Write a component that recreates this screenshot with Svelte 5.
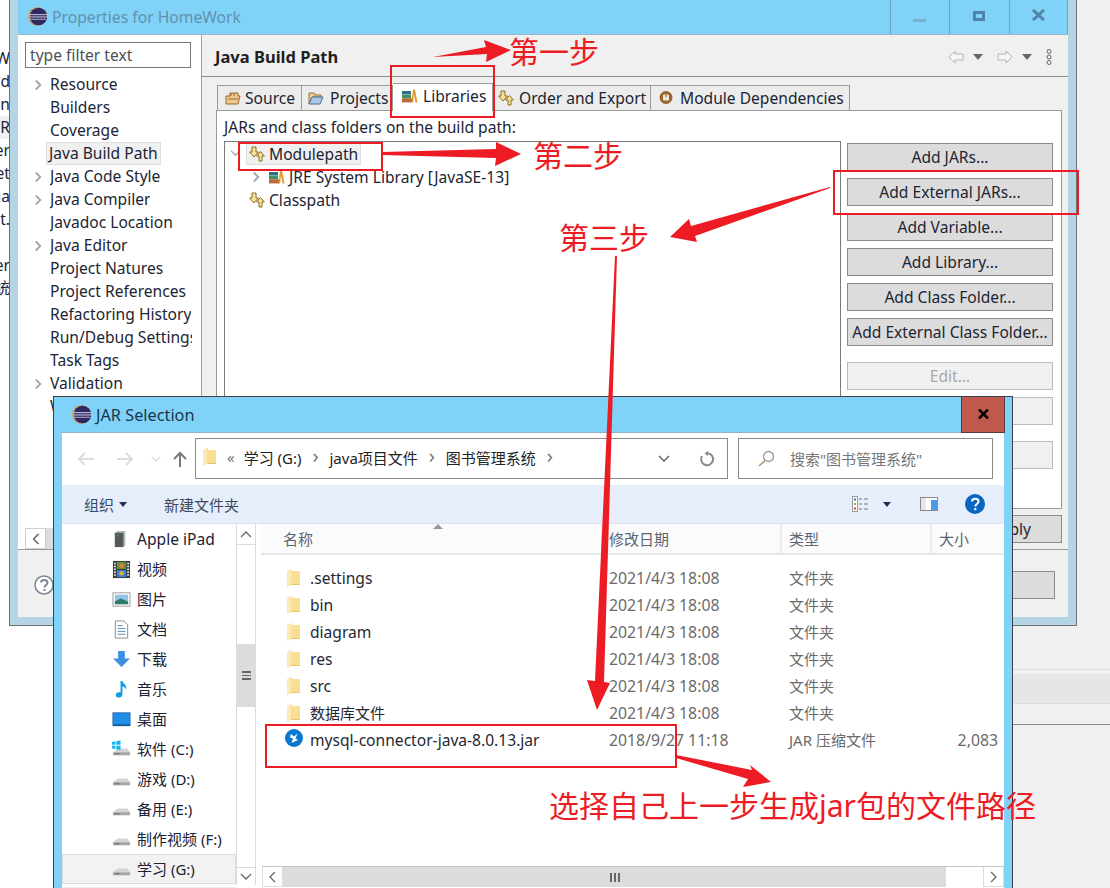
<script>
	const clipped = ['W', 'd', 'in', 'nR', 'er', 'et', 'ua', 't.', '', 'er', '统'];
	const navItems = [
		{ label: 'Resource', arrow: true },
		{ label: 'Builders' },
		{ label: 'Coverage' },
		{ label: 'Java Build Path', selected: true },
		{ label: 'Java Code Style', arrow: true },
		{ label: 'Java Compiler', arrow: true },
		{ label: 'Javadoc Location' },
		{ label: 'Java Editor', arrow: true },
		{ label: 'Project Natures' },
		{ label: 'Project References' },
		{ label: 'Refactoring History' },
		{ label: 'Run/Debug Settings' },
		{ label: 'Task Tags' },
		{ label: 'Validation', arrow: true },
		{ label: 'W' }
	];
	const tabs = [
		{ label: 'Source', icon: 'source', width: 85, pad: 7, gap: 4 },
		{ label: 'Projects', icon: 'projects', width: 91, pad: 6, gap: 6 },
		{ label: 'Libraries', icon: 'lib', width: 100, pad: 9, gap: 5, active: true },
		{ label: 'Order and Export', icon: 'cp', width: 158, pad: 5, gap: 5 },
		{ label: 'Module Dependencies', icon: 'module', width: 199, pad: 7, gap: 6 }
	];
	const buttons = [
		{ label: 'Add JARs...' },
		{ label: 'Add External JARs...' },
		{ label: 'Add Variable...' },
		{ label: 'Add Library...' },
		{ label: 'Add Class Folder...' },
		{ label: 'Add External Class Folder...' }
	];
	const places = [
		{ label: 'Apple iPad', icon: 'ipad', latin: true },
		{ label: '视频', icon: 'video' },
		{ label: '图片', icon: 'picture' },
		{ label: '文档', icon: 'doc' },
		{ label: '下载', icon: 'download' },
		{ label: '音乐', icon: 'music' },
		{ label: '桌面', icon: 'desktop' },
		{ label: '软件 (C:)', icon: 'sysdrive' },
		{ label: '游戏 (D:)', icon: 'drive' },
		{ label: '备用 (E:)', icon: 'drive' },
		{ label: '制作视频 (F:)', icon: 'drive' },
		{ label: '学习 (G:)', icon: 'drive', selected: true }
	];
	const files = [
		{ name: '.settings', date: '2021/4/3 18:08', type: '文件夹' },
		{ name: 'bin', date: '2021/4/3 18:08', type: '文件夹' },
		{ name: 'diagram', date: '2021/4/3 18:08', type: '文件夹' },
		{ name: 'res', date: '2021/4/3 18:08', type: '文件夹' },
		{ name: 'src', date: '2021/4/3 18:08', type: '文件夹' },
		{ name: '数据库文件', date: '2021/4/3 18:08', type: '文件夹', cjk: true },
		{ name: 'mysql-connector-java-8.0.13.jar', date: '2018/9/27 11:18', type: 'JAR 压缩文件', size: '2,083', jar: true }
	];
</script>

{#snippet eclipse()}
	<svg class="logo" viewBox="0 0 20 20">
		<circle cx="10" cy="10" r="10" fill="#c9a163" />
		<circle cx="11" cy="10" r="9.2" fill="#2e2960" />
		<rect x="1" y="7.6" width="19" height="1" fill="#d8d8e8" />
		<rect x="1" y="10" width="19" height="1" fill="#d8d8e8" />
		<rect x="1" y="12.4" width="18" height="1" fill="#b8b8d0" />
	</svg>
{/snippet}

{#snippet chevron()}
	<svg class="chev" viewBox="0 0 10 12"><path d="M2 1l5 5-5 5" fill="none" stroke="#a4a4a4" stroke-width="2" /></svg>
{/snippet}

{#snippet small(kind)}
	<svg class="small" viewBox="0 0 16 16">
		{#if kind === 'lib'}
			<rect x="0" y="3" width="9" height="3.4" fill="#2f6f86" />
			<rect x="0" y="6.6" width="9" height="3.4" fill="#3f9160" />
			<rect x="0" y="10.2" width="10" height="4.2" fill="#b9683a" />
			<path d="M9.5 14.4L11 1.6h2l2.5 12.8h-2l-1.6-8-.8 8z" fill="#e49b2e" />
		{:else if kind === 'cp'}
			<path d="M3 1h4v5h2.4L5 11 .6 6H3z" fill="#f7e29c" stroke="#8c6d20" />
			<path d="M10 15h3v-5h2.4L11.5 5.5 7.6 10H10z" fill="#f7e29c" stroke="#8c6d20" />
		{:else if kind === 'source'}
			<path d="M1 6h4V3h8v3h2l-2 8H1z" fill="#efc98a" stroke="#8f6a34" />
			<path d="M6 3v3M9 3v3M3 9h10" stroke="#8f6a34" fill="none" />
		{:else if kind === 'projects'}
			<path d="M1 3h5l1 2h6v2H4l-3 7z" fill="#e9d38f" stroke="#8a7338" />
			<path d="M4 7h11l-3 7H1z" fill="#a8c6ea" stroke="#4f6f9c" />
		{:else if kind === 'module'}
			<circle cx="8" cy="7.5" r="6.5" fill="#96662f" />
			<rect x="5" y="4.5" width="6" height="6" rx="1" fill="#f2ead8" />
			<rect x="7.4" y="4.5" width="1.2" height="2.6" fill="#96662f" />
		{/if}
	</svg>
{/snippet}

{#snippet folder()}
	<svg class="folder" viewBox="0 0 13 18">
		<path d="M0 2L5 0v2h8v14H4l-4 2z" fill="#f8df93" />
		<path d="M0 2L4 .4V16l-4 2z" fill="#fbeab6" />
		<path d="M4 16h9v-1H4z" fill="#e8c468" />
	</svg>
{/snippet}

{#snippet place(kind)}
	<svg class="place" viewBox="0 0 20 20">
		{#if kind === 'ipad'}
			<path d="M3 3l3-2h8v15l-2 2H3z" fill="#b4b4b4" />
			<rect x="3" y="3" width="9" height="15" fill="#55595c" />
			<rect x="5" y="5" width="2" height="2" fill="#3fa14a" />
		{:else if kind === 'video'}
			<rect x="1" y="1" width="18" height="18" fill="#3a3a3a" />
			<rect x="5" y="2" width="10" height="7.5" fill="#6d8f3a" />
			<rect x="5" y="10.5" width="10" height="7.5" fill="#3f7fcf" />
			<circle cx="10" cy="6" r="2.4" fill="#d8843a" />
			<circle cx="10" cy="14" r="2.4" fill="#d8b04a" />
			{#each [3, 6, 9, 12, 15] as y}
				<rect x="2" {y} width="2" height="1.6" fill="#eee" />
				<rect x="16" {y} width="2" height="1.6" fill="#eee" />
			{/each}
		{:else if kind === 'picture'}
			<rect x="1" y="3" width="18" height="14" fill="#fff" stroke="#9a9a9a" />
			<rect x="3" y="5" width="14" height="10" fill="#8fc3e8" />
			<path d="M3 12l6-3 8 3v3H3z" fill="#2f7a6b" />
		{:else if kind === 'doc'}
			<path d="M3.5 1h9l4 4v14h-13z" fill="#fff" stroke="#8a8a8a" />
			<path d="M6 6h5M6 9h8M6 12h8M6 15h8" stroke="#4a8ac0" />
		{:else if kind === 'download'}
			<path d="M6.5 1h7v8H19l-9 9-9-9h5.5z" fill="#3f8fe0" />
		{:else if kind === 'music'}
			<path d="M9 1h2c.5 3 5 4 4 9-1-2-2.500-3-4-3.200V15c0 2.500-2 3.500-4 3.500S4 17.500 4 15.500 6 12.500 9 13z" fill="#0f9fe8" />
		{:else if kind === 'desktop'}
			<rect x="1" y="3" width="18" height="13" fill="#1f8fe8" stroke="#2a6aa8" />
			<rect x="1" y="15" width="18" height="2" fill="#1a5f9c" />
		{:else}
			<path d="M1 13l5-4h10l3 4v3H1z" fill="#d4d4d4" />
			<path d="M1 13h18v3H1z" fill="#a6a6a6" />
			<rect x="3" y="14" width="5" height="1" fill="#666" />
			{#if kind === 'sysdrive'}
				<path d="M0 2l3.500-.6V5H0zM4.500 1.300L9 .6V5H4.500zM0 6h3.500v3.600L0 9zM4.500 6H9v4.500l-4.500-.7z" fill="#12b4ee" />
			{/if}
		{/if}
	</svg>
{/snippet}

<div class="desktop">
	<div class="backdrop">
		<div class="band"></div>
		<div class="rule"></div>
	</div>

	<div class="behind">
		{#each clipped as t}
			<div class="behind-row" class:hl={t === 'nR'}><span>{t}</span></div>
		{/each}
	</div>

	<section class="props">
		<header class="props-title">
			<span class="title-logo">{@render eclipse()}</span>
			<span class="props-title-text">Properties for HomeWork</span>
			<div class="win-ctrls">
				<div class="win-ctrl"><i class="ctl-min"></i></div>
				<div class="win-ctrl"><i class="ctl-max"></i></div>
				<div class="win-ctrl">
					<svg width="13" height="12" viewBox="0 0 13 12"><path d="M1 1l11 10M12 1L1 11" stroke="#4f86a8" stroke-width="3" /></svg>
				</div>
			</div>
		</header>

		<div class="props-body">
			<nav class="side">
				<div class="filter">type filter text</div>
				<ul class="side-list">
					{#each navItems as item}
						<li class="side-row">
							<span class="side-arrow">{#if item.arrow}{@render chevron()}{/if}</span>
							<span class="side-label" class:picked={item.selected}>{item.label}</span>
						</li>
					{/each}
				</ul>
				<div class="side-scroll">
					<div class="scroll-btn">
						<svg width="8" height="12" viewBox="0 0 8 12"><path d="M6.500 1l-5 5 5 5" fill="none" stroke="#555" stroke-width="1.300" /></svg>
					</div>
					<div class="scroll-thumb"></div>
				</div>
			</nav>

			<main class="main">
				<div class="main-head">
					<h1>Java Build Path</h1>
					<div class="history">
						<svg width="16" height="14" viewBox="0 0 16 14"><path d="M1 7l6-6v3h8v6H7v3z" fill="#f6f6f6" stroke="#b4b4b4" /></svg>
						<i class="drop"></i>
						<svg width="16" height="14" viewBox="0 0 16 14"><path d="M15 7L9 1v3H1v6h8v3z" fill="#f6f6f6" stroke="#b4b4b4" /></svg>
						<i class="drop"></i>
						<svg width="6" height="16" viewBox="0 0 6 16">
							<circle cx="3" cy="2.500" r="2" fill="none" stroke="#666" />
							<circle cx="3" cy="8" r="2" fill="none" stroke="#666" />
							<circle cx="3" cy="13.500" r="2" fill="none" stroke="#666" />
						</svg>
					</div>
				</div>

				<div class="tabs">
					{#each tabs as tab}
						<div
							class="tab"
							class:active={tab.active}
							style="width:{tab.width}px;padding-left:{tab.pad}px;gap:{tab.gap}px"
						>
							{@render small(tab.icon)}<span>{tab.label}</span>
						</div>
					{/each}
				</div>

				<div class="panel">
					<p class="panel-label">JARs and class folders on the build path:</p>
					<div class="panel-grid">
						<div class="tree">
							<div class="tree-row lvl0">
								<svg class="chev-down" viewBox="0 0 12 8"><path d="M1 1l5 5 5-5" fill="none" stroke="#a4a4a4" stroke-width="1.500" /></svg>
								<span class="tree-picked">{@render small('cp')}<span>Modulepath</span></span>
							</div>
							<div class="tree-row lvl1">
								<span class="tree-chev">{@render chevron()}</span>
								{@render small('lib')}<span>JRE System Library [JavaSE-13]</span>
							</div>
							<div class="tree-row lvl2">
								{@render small('cp')}<span>Classpath</span>
							</div>
						</div>
						<div class="btns">
							{#each buttons as b}
								<div class="btn">{b.label}</div>
							{/each}
							<div class="btn off first-off">Edit...</div>
							<div class="btn off"></div>
							<div class="btn off far-off"></div>
						</div>
					</div>
				</div>

				<div class="apply-row"><div class="btn apply">Apply</div></div>
			</main>
		</div>

		<footer class="props-foot">
			<svg class="help" width="20" height="20" viewBox="0 0 20 20">
				<circle cx="10" cy="10" r="9" fill="#fff" stroke="#7c8494" stroke-width="1.500" />
				<path d="M7 7.500C7 4 13.500 4 13.500 7.500c0 2.500-3 2.500-3 5" fill="none" stroke="#7c8494" stroke-width="2" />
				<rect x="9.500" y="14" width="2" height="2" fill="#7c8494" />
			</svg>
			<div class="btn foot-btn">Cancel</div>
		</footer>
	</section>

	<section class="dialog">
		<header class="dlg-title">
			<span class="dlg-logo">{@render eclipse()}</span>
			<span class="dlg-title-text">JAR Selection</span>
			<div class="dlg-close">
				<svg width="11" height="10" viewBox="0 0 11 10"><path d="M1 .5l9 9M10 .5l-9 9" stroke="#000" stroke-width="2.500" /></svg>
			</div>
		</header>

		<div class="dlg-inner">
			<div class="addr-bar">
				<div class="addr-nav">
					<svg width="18" height="14" viewBox="0 0 18 14"><path d="M17 7H2M8 1L2 7l6 6" fill="none" stroke="#dcdcdc" stroke-width="2" /></svg>
					<svg width="18" height="14" viewBox="0 0 18 14"><path d="M1 7h15M10 1l6 6-6 6" fill="none" stroke="#dcdcdc" stroke-width="2" /></svg>
					<svg width="10" height="6" viewBox="0 0 10 6"><path d="M1 1l4 4 4-4" fill="none" stroke="#dcdcdc" stroke-width="1.500" /></svg>
					<svg width="14" height="16" viewBox="0 0 14 16"><path d="M7 16V2M1 8l6-6 6 6" fill="none" stroke="#7a7a7a" stroke-width="2" /></svg>
				</div>
				<div class="addr">
					{@render folder()}
					<span class="crumb-mark">«</span>
					<span class="crumb">学习 (G:)</span>
					<span class="crumb-sep">›</span>
					<span class="crumb">java项目文件</span>
					<span class="crumb-sep">›</span>
					<span class="crumb">图书管理系统</span>
					<span class="crumb-sep">›</span>
					<div class="addr-end">
						<svg width="12" height="7" viewBox="0 0 12 7"><path d="M1 1l5 5 5-5" fill="none" stroke="#666" stroke-width="1.500" /></svg>
						<svg width="16" height="16" viewBox="0 0 16 16"><path d="M8.500 2.200A6 6 0 1 1 3 5" fill="none" stroke="#888" stroke-width="2" /><path d="M9 0v5L5.500 2.500z" fill="#888" /></svg>
					</div>
				</div>
				<div class="search">
					<svg width="17" height="17" viewBox="0 0 17 17"><circle cx="10.500" cy="6.500" r="5" fill="none" stroke="#9a9a9a" stroke-width="1.300" /><path d="M7 10.500L1 16" stroke="#b08a6a" stroke-width="1.300" /></svg>
					<span>搜索"图书管理系统"</span>
				</div>
			</div>

			<div class="toolbar">
				<span class="tool">组织</span>
				<i class="drop navy"></i>
				<span class="tool new-folder">新建文件夹</span>
				<div class="tool-right">
					<svg width="18" height="16" viewBox="0 0 18 16">
						<rect x=".5" y=".5" width="5" height="15" fill="#fff" stroke="#9a9a9a" />
						<rect x="2" y="2.500" width="2" height="2" fill="#3a6ab0" />
						<rect x="2" y="7" width="2" height="2" fill="#c09a40" />
						<rect x="2" y="11.500" width="2" height="2" fill="#d04040" />
						<path d="M7 3h3M12 3h4M7 8h3M12 8h4M7 13h3M12 13h4" stroke="#777" />
					</svg>
					<i class="drop navy view-drop"></i>
					<svg class="pane" width="18" height="14" viewBox="0 0 18 14">
						<rect x=".5" y=".5" width="17" height="13" fill="#fff" stroke="#8a8a8a" />
						<rect x="11" y="3" width="6" height="10" fill="#4a9ae8" />
						<rect x="1" y="1" width="5" height="12" fill="#e8e8e8" />
					</svg>
					<svg class="qm" width="20" height="20" viewBox="0 0 20 20">
						<circle cx="10" cy="10" r="10" fill="#0b66c2" />
						<path d="M7 7.500C7 3.800 13.500 3.800 13.500 7.500c0 2.700-3.200 2.300-3.200 5" fill="none" stroke="#fff" stroke-width="2" />
						<rect x="9.300" y="14" width="2" height="2.200" fill="#fff" />
					</svg>
				</div>
			</div>

			<div class="browser">
				<ul class="places">
					{#each places as p}
						<li class="place-row" class:picked={p.selected} class:latin={p.latin}>
							{@render place(p.icon)}<span>{p.label}</span>
						</li>
					{/each}
				</ul>
				<div class="vscroll">
					<div class="vs-btn"><svg width="12" height="7" viewBox="0 0 12 7"><path d="M1 6l5-5 5 5" fill="none" stroke="#666" stroke-width="1.300" /></svg></div>
					<div class="vs-track">
						<div class="vs-thumb"><i></i><i></i><i></i></div>
					</div>
					<div class="vs-btn"><svg width="12" height="7" viewBox="0 0 12 7"><path d="M1 1l5 5 5-5" fill="none" stroke="#666" stroke-width="1.300" /></svg></div>
				</div>

				<div class="listing">
					<div class="list-head">
						<span class="col c-name">名称</span>
						<span class="col c-date">修改日期</span>
						<span class="col c-type">类型</span>
						<span class="col c-size">大小</span>
						<svg class="sort" width="10" height="5" viewBox="0 0 10 5"><path d="M5 0l5 5H0z" fill="#999" /></svg>
					</div>
					<div class="rows">
						{#each files as f}
							<div class="file">
								<span class="file-name" class:cjk={f.cjk}>
									{#if f.jar}
										<svg class="jar" viewBox="0 0 18 18">
											<circle cx="9" cy="9" r="9" fill="#0a78d0" />
											<path d="M6 5l3 2.500 3.500-3-2 5 2.500 1.500-6.500 3 1.500-4.500-3-1z" fill="#fff" />
										</svg>
									{:else}
										{@render folder()}
									{/if}
									<span>{f.name}</span>
								</span>
								<span class="meta">{f.date}</span>
								<span class="meta cjk">{f.type}</span>
								<span class="meta size">{f.size ?? ''}</span>
							</div>
						{/each}
					</div>
					<div class="hscroll">
						<div class="hs-btn"><svg width="7" height="12" viewBox="0 0 7 12"><path d="M6 1L1 6l5 5" fill="none" stroke="#666" stroke-width="1.300" /></svg></div>
						<div class="hs-thumb"><i></i><i></i><i></i></div>
						<div class="hs-track"></div>
						<div class="hs-btn"><svg width="7" height="12" viewBox="0 0 7 12"><path d="M1 1l5 5-5 5" fill="none" stroke="#666" stroke-width="1.300" /></svg></div>
					</div>
				</div>
			</div>
		</div>
	</section>

	<!-- red markup drawn on top of the screenshot -->
	<div class="mark box-lib"></div>
	<div class="mark box-module"></div>
	<div class="mark box-ext"></div>
	<div class="mark box-jar"></div>

	<svg class="arrows" viewBox="0 0 1110 888">
		<polygon points="433,57 486,47 484,40 511,50 486,62 487,54" />
		<polygon points="382,152 496,149 496,142 521,154 495,166 496,158 382,155" />
		<polygon points="830,187 691,226 689,219 670,237 697,242 695,236 830,188" />
		<polygon points="615,256 617,256 604,682 610,683 597,710 587,680 595,681" />
		<polygon points="676,755 752,770 750,765 771,782 743,787 748,779 676,758" />
	</svg>

	<div class="note n1">第一步</div>
	<div class="note n2">第二步</div>
	<div class="note n3">第三步</div>
	<div class="note n4">选择自己上一步生成jar包的文件路径</div>
</div>

<style>
	:global(body) {
		margin: 0;
		background: #fff;
	}

	* {
		box-sizing: border-box;
	}

	ul {
		list-style: none;
		margin: 0;
		padding: 0;
	}

	.desktop {
		position: relative;
		width: 1110px;
		height: 888px;
		overflow: hidden;
		font-family: 'Noto Sans', 'Noto Sans CJK SC', sans-serif;
		font-size: 15.6px;
		color: #1c2433;
	}

	.backdrop {
		position: absolute;
		left: 700px;
		top: 0;
		width: 410px;
		height: 888px;
		background: #f0f0f0;
		padding-top: 669px;
	}

	.band {
		height: 35px;
		margin-top: 0;
		border-top: 1px solid #dcdcdc;
		border-bottom: 1px solid #dcdcdc;
		background: linear-gradient(#f0f0f0 0 4px, #e6e6e6 4px);
	}

	.rule {
		height: 1px;
		margin-top: 20px;
		background: #888;
	}

	.behind {
		position: absolute;
		left: 0;
		top: 47px;
		width: 10px;
		overflow: hidden;
	}

	.behind-row {
		display: flex;
		justify-content: flex-end;
		height: 23px;
		line-height: 23px;
		white-space: nowrap;
	}

	.behind-row.hl {
		background: #f0f0f0;
	}

	/* Properties window */
	.props {
		position: absolute;
		left: 9px;
		top: 0;
		width: 1068px;
		height: 626px;
		display: flex;
		flex-direction: column;
		padding: 0 8px 8px;
		background: #b5d5e4;
		border: 1px solid #6a7078;
		border-top: 0;
	}

	.props-title {
		display: flex;
		align-items: center;
		height: 35px;
		flex: none;
		margin: 0;
		background: #81d2f9;
		border-bottom: 1px solid #9db8c6;
	}

	.title-logo {
		display: flex;
		margin: -1px 5px 0 10px;
	}

	.logo {
		width: 19px;
		height: 19px;
	}

	.props-title-text {
		font-size: 15.700px;
		color: #5f93ad;
	}

	.win-ctrls {
		display: flex;
		margin-left: auto;
		height: 100%;
	}

	.win-ctrl {
		width: 59.500px;
		display: flex;
		align-items: center;
		justify-content: center;
		border-left: 1px solid #6fa3bd;
		padding-bottom: 5px;
	}

	.win-ctrl:last-child {
		border-right: 1px solid #6fa3bd;
	}

	.ctl-min {
		display: block;
		width: 13px;
		height: 3px;
		margin-top: 12px;
		background: #79afcc;
	}

	.ctl-max {
		display: block;
		width: 12px;
		height: 10px;
		border: 3px solid #4f86a8;
		margin-top: 2px;
	}

	.props-body {
		display: flex;
		height: 514px;
		flex: none;
	}

	.side {
		width: 184px;
		flex: none;
		display: flex;
		flex-direction: column;
		background: #fff;
		border-right: 1px solid #a0a0a0;
		padding-top: 7px;
		position: relative;
	}

	.filter {
		margin-left: 7px;
		width: 166px;
		height: 26px;
		border: 1px solid #7a7a7a;
		padding-left: 4px;
		line-height: 24px;
		color: #4b4f55;
	}

	.side-list {
		margin-top: 5px;
		height: 415px;
		overflow: hidden;
	}

	.side-row {
		display: flex;
		align-items: center;
		height: 23px;
	}

	.side-arrow {
		display: flex;
		justify-content: center;
		width: 32px;
		padding-left: 8px;
		flex: none;
	}

	.chev {
		display: block;
		width: 9px;
		height: 12px;
	}

	.side-label {
		white-space: nowrap;
		line-height: 23px;
		max-width: 142px;
		overflow: hidden;
	}

	.side-label.picked {
		margin-left: -4px;
		padding: 0 3px;
		background: #f0f0f0;
		box-shadow: inset 0 0 0 1px #dedede;
	}

	.side-scroll {
		display: flex;
		height: 21px;
		margin-top: auto;
		margin-left: 7px;
	}

	.scroll-btn {
		width: 21px;
		display: flex;
		align-items: center;
		justify-content: center;
		border: 1px solid #cfcfcf;
		background: #fff;
	}

	.scroll-thumb {
		flex: 1;
		background: #dcdcdc;
	}

	.main {
		flex: 1;
		display: flex;
		flex-direction: column;
		background: #f0f0f0;
	}

	.main-head {
		display: flex;
		align-items: center;
		height: 42px;
		padding-left: 13px;
		padding-right: 16px;
		border-bottom: 1px solid #8c8c8c;
		flex: none;
	}

	.main-head h1 {
		margin: 1px 0 0;
		font-size: 16.500px;
		font-weight: 700;
		color: #1f1f1f;
	}

	.history {
		margin-left: auto;
		display: flex;
		align-items: center;
		gap: 7px;
		margin-top: 3px;
	}

	.history .drop {
		margin: 0 7px 0 2px;
	}

	.drop {
		display: block;
		width: 0;
		height: 0;
		border-left: 5px solid transparent;
		border-right: 5px solid transparent;
		border-top: 6px solid #666;
	}

	.drop.navy {
		border-top-color: #1f2f50;
		border-left-width: 4.500px;
		border-right-width: 4.500px;
		border-top-width: 5px;
	}

	.tabs {
		display: flex;
		align-items: flex-end;
		height: 33px;
		padding-left: 15px;
		flex: none;
	}

	.tab {
		display: flex;
		align-items: center;
		height: 25px;
		white-space: nowrap;
		background: #ececec;
		border: 1px solid #9a9a9a;
		border-bottom: 0;
		border-left: 0;
		color: #1c2433;
	}

	.tab:first-child {
		border-left: 1px solid #9a9a9a;
	}

	.tab.active {
		height: 28px;
		margin-bottom: -1px;
		background: #fff;
		position: relative;
		padding-bottom: 4px;
	}

	.small {
		width: 16px;
		height: 16px;
		flex: none;
	}

	.panel {
		margin-left: 14px;
		width: 846px;
		height: 399px;
		flex: none;
		padding: 6px 7px 0;
		background: #fff;
		border: 1px solid #9a9a9a;
	}

	.panel-label {
		margin: 0;
		line-height: 20px;
		height: 24px;
	}

	.panel-grid {
		display: flex;
		gap: 6px;
	}

	.tree {
		width: 617px;
		height: 358px;
		border: 1px solid #7a7a7a;
		flex: none;
	}

	.tree-row {
		display: flex;
		align-items: center;
		height: 23px;
		white-space: nowrap;
	}

	.tree-row .small {
		margin-right: 4px;
	}

	.lvl0 {
		padding-left: 5px;
	}

	.chev-down {
		width: 11px;
		height: 7px;
		margin-right: 5px;
	}

	.tree-picked {
		display: flex;
		align-items: center;
		height: 23px;
		width: 115px;
		padding-left: 3px;
		background: #f0f0f0;
		box-shadow: inset 0 0 0 1px #dedede;
	}

	.lvl1 {
		padding-left: 27px;
	}

	.tree-chev {
		margin-right: 8px;
		display: flex;
	}

	.lvl2 {
		padding-left: 24px;
	}

	.btns {
		width: 206px;
		display: flex;
		flex-direction: column;
		gap: 7px;
		padding-top: 2px;
	}

	.btn {
		height: 28px;
		line-height: 26px;
		text-align: center;
		background: #dcdcdc;
		border: 1px solid #8a8a8a;
		white-space: nowrap;
	}

	.btn.off {
		background: #f0f0f0;
		border-color: #b8bcbc;
		color: #a8a8a8;
	}

	.first-off {
		margin-top: 9px;
	}

	.far-off {
		margin-top: 9px;
	}

	.apply-row {
		display: flex;
		justify-content: flex-end;
		margin-top: 6px;
		padding-right: 6px;
	}

	.apply {
		width: 150px;
		text-align: right;
		padding-right: 30px;
	}

	.props-foot {
		display: flex;
		align-items: center;
		justify-content: space-between;
		height: 68px;
		flex: none;
		padding: 0 13px 0 16px;
		background: #f0f0f0;
		border-top: 1px solid #9a9a9a;
	}

	.help {
		margin-top: 3px;
	}

	.foot-btn {
		width: 204px;
		height: 28px;
		margin-top: 2px;
		text-align: right;
		padding-right: 41px;
		color: #0b3a78;
	}

	/* JAR Selection dialog */
	.dialog {
		position: absolute;
		left: 53px;
		top: 396px;
		width: 960px;
		height: 492px;
		padding: 0 8px;
		display: flex;
		flex-direction: column;
		background: #81d2f9;
		border: 1px solid #3b4148;
		border-bottom: 0;
	}

	.dlg-title {
		display: flex;
		align-items: center;
		height: 36px;
		flex: none;
		border-bottom: 1px solid #8eb4c8;
		margin-right: -1px;
	}

	.dlg-logo {
		display: flex;
		margin: 0 5px 0 10px;
	}

	.dlg-title-text {
		font-size: 16.300px;
		color: #17384c;
	}

	.dlg-close {
		margin-left: auto;
		width: 44px;
		height: 36px;
		display: flex;
		align-items: center;
		justify-content: center;
		background: #c1584e;
		border: 1px solid #5c3a38;
		border-top: 0;
	}

	.dlg-inner {
		flex: 1;
		display: flex;
		flex-direction: column;
		background: #fff;
		min-height: 0;
		font-size: 15px;
	}

	.addr-bar {
		display: flex;
		height: 52px;
		flex: none;
		padding-top: 5px;
	}

	.addr-nav {
		display: flex;
		align-items: center;
		width: 133px;
		height: 41px;
		padding-left: 15px;
		gap: 21px;
	}

	.addr-nav svg:nth-child(3) {
		margin-left: -4px;
	}

	.addr-nav svg:nth-child(4) {
		margin-left: -9px;
	}

	.addr {
		display: flex;
		align-items: center;
		width: 533px;
		height: 41px;
		padding-left: 7px;
		padding-bottom: 3px;
		border: 1px solid #8a8a8a;
		white-space: nowrap;
	}

	.folder {
		width: 13px;
		height: 18px;
		flex: none;
	}

	.crumb-mark {
		margin: 0 9px 0 11px;
		color: #777;
	}

	.crumb {
		color: #222;
	}

	.crumb-sep {
		width: 28px;
		text-align: center;
		color: #777;
		font-size: 20px;
		line-height: 20px;
		margin-top: -3px;
	}

	.addr-end {
		margin-left: auto;
		display: flex;
		align-items: center;
		gap: 29px;
		padding-right: 12px;
		margin-top: 3px;
	}

	.search {
		display: flex;
		align-items: center;
		width: 255px;
		height: 41px;
		margin-left: 10px;
		padding-left: 19px;
		gap: 15px;
		border: 1px solid #8a8a8a;
		color: #777;
		white-space: nowrap;
	}

	.toolbar {
		display: flex;
		align-items: center;
		height: 39px;
		flex: none;
		padding-left: 22px;
		background: #e6eefc;
		border-bottom: 1px solid #dde3ec;
	}

	.tool {
		color: #3b4a5e;
		white-space: nowrap;
	}

	.toolbar .drop {
		margin-left: 5px;
	}

	.new-folder {
		margin-left: 37px;
	}

	.tool-right {
		margin-left: auto;
		display: flex;
		align-items: center;
		padding-right: 19px;
	}

	.view-drop {
		margin: 0 0 0 13px !important;
	}

	.pane {
		margin-left: 29px;
	}

	.qm {
		margin-left: 27px;
	}

	.browser {
		flex: 1;
		display: flex;
		min-height: 0;
	}

	.places {
		width: 174px;
		flex: none;
		border-bottom: 1px solid #eee;
	}

	.place-row {
		display: flex;
		align-items: center;
		height: 30px;
		padding-left: 50px;
		gap: 6px;
		white-space: nowrap;
		color: #1a2233;
	}

	.place-row span {
		margin-top: -2px;
	}

	.place-row.latin {
		font-size: 15.600px;
	}

	.place-row.latin span {
		margin-top: 0;
	}

	.place-row.picked {
		background: #f2f2f2;
		box-shadow: inset 0 0 0 1px #dcdcdc;
	}

	.place {
		width: 19px;
		height: 19px;
		flex: none;
	}

	.vscroll {
		width: 20px;
		flex: none;
		display: flex;
		flex-direction: column;
		border-left: 1px solid #dcdcdc;
		border-right: 1px solid #dcdcdc;
		margin-bottom: 3px;
	}

	.vs-btn {
		height: 21px;
		flex: none;
		display: flex;
		align-items: center;
		justify-content: center;
		border-bottom: 1px solid #dcdcdc;
	}

	.vs-btn:last-child {
		border-bottom: 0;
		border-top: 1px solid #dcdcdc;
		height: 18px;
	}

	.vs-track {
		flex: 1;
		padding-top: 99px;
	}

	.vs-thumb {
		height: 63px;
		background: #dcdcdc;
		display: flex;
		flex-direction: column;
		align-items: center;
		justify-content: center;
		gap: 2px;
	}

	.vs-thumb i {
		display: block;
		width: 9px;
		height: 1.500px;
		background: #666;
	}

	.listing {
		flex: 1;
		margin-left: 6px;
		display: flex;
		flex-direction: column;
		min-width: 0;
		position: relative;
	}

	.list-head {
		display: flex;
		height: 31px;
		flex: none;
		background: #fbfbfb;
		border-bottom: 2px solid #e6e6e6;
		margin-left: -1px;
		color: #5a6472;
	}

	.col {
		display: flex;
		align-items: center;
		padding-left: 7px;
		border-right: 2px solid #ececec;
		white-space: nowrap;
	}

	.c-name {
		width: 342px;
		padding-left: 22px;
	}

	.c-date {
		width: 179px;
		padding-left: 6px;
	}

	.c-type {
		width: 150px;
	}

	.c-size {
		flex: 1;
		border-right: 0;
	}

	.sort {
		position: absolute;
		left: 171px;
		top: 0;
	}

	.rows {
		flex: 1;
		padding-top: 9px;
		min-height: 0;
	}

	.file {
		display: grid;
		grid-template-columns: 322px 180px 140px 1fr;
		align-items: center;
		height: 27px;
		padding-left: 25px;
		padding-right: 6px;
		white-space: nowrap;
	}

	.file-name {
		display: flex;
		align-items: center;
		gap: 10px;
		color: #1f2735;
		font-size: 15.600px;
	}

	.file-name.cjk {
		font-size: 15px;
	}

	.jar {
		width: 18px;
		height: 18px;
		margin: -4px -3px 0 -2px;
		flex: none;
	}

	.meta {
		color: #6a6a6a;
		font-size: 15.800px;
	}

	.meta.cjk {
		font-size: 15px;
	}

	.size {
		text-align: right;
	}

	.hscroll {
		display: flex;
		height: 21px;
		flex: none;
		margin-bottom: 1px;
		border-top: 1px solid #c4c4c4;
	}

	.hs-btn {
		width: 21px;
		flex: none;
		display: flex;
		align-items: center;
		justify-content: center;
		border: 1px solid #dcdcdc;
		border-top: 0;
	}

	.hs-thumb {
		width: 663px;
		flex: none;
		background: #dcdcdc;
		display: flex;
		align-items: center;
		justify-content: center;
		gap: 2px;
	}

	.hs-thumb i {
		display: block;
		width: 2px;
		height: 9px;
		background: #666;
	}

	.hs-track {
		flex: 1;
		background: #fff;
	}

	/* annotations */
	.mark {
		position: absolute;
		border: 2px solid #ed1c24;
	}

	.box-lib {
		left: 390px;
		top: 65px;
		width: 105px;
		height: 53px;
	}

	.box-module {
		left: 238px;
		top: 142px;
		width: 145px;
		height: 29px;
	}

	.box-ext {
		left: 833px;
		top: 170px;
		width: 246px;
		height: 45px;
	}

	.box-jar {
		left: 265px;
		top: 724px;
		width: 412px;
		height: 44px;
	}

	.arrows {
		position: absolute;
		left: 0;
		top: 0;
		width: 1110px;
		height: 888px;
		fill: #ed1c24;
	}

	.note {
		position: absolute;
		font-size: 30px;
		line-height: 40px;
		color: #ed1c24;
		white-space: nowrap;
	}

	.n1 {
		left: 509px;
		top: 32px;
	}

	.n2 {
		left: 533px;
		top: 136px;
	}

	.n3 {
		left: 559px;
		top: 218px;
	}

	.n4 {
		left: 549px;
		top: 786px;
	}
</style>
